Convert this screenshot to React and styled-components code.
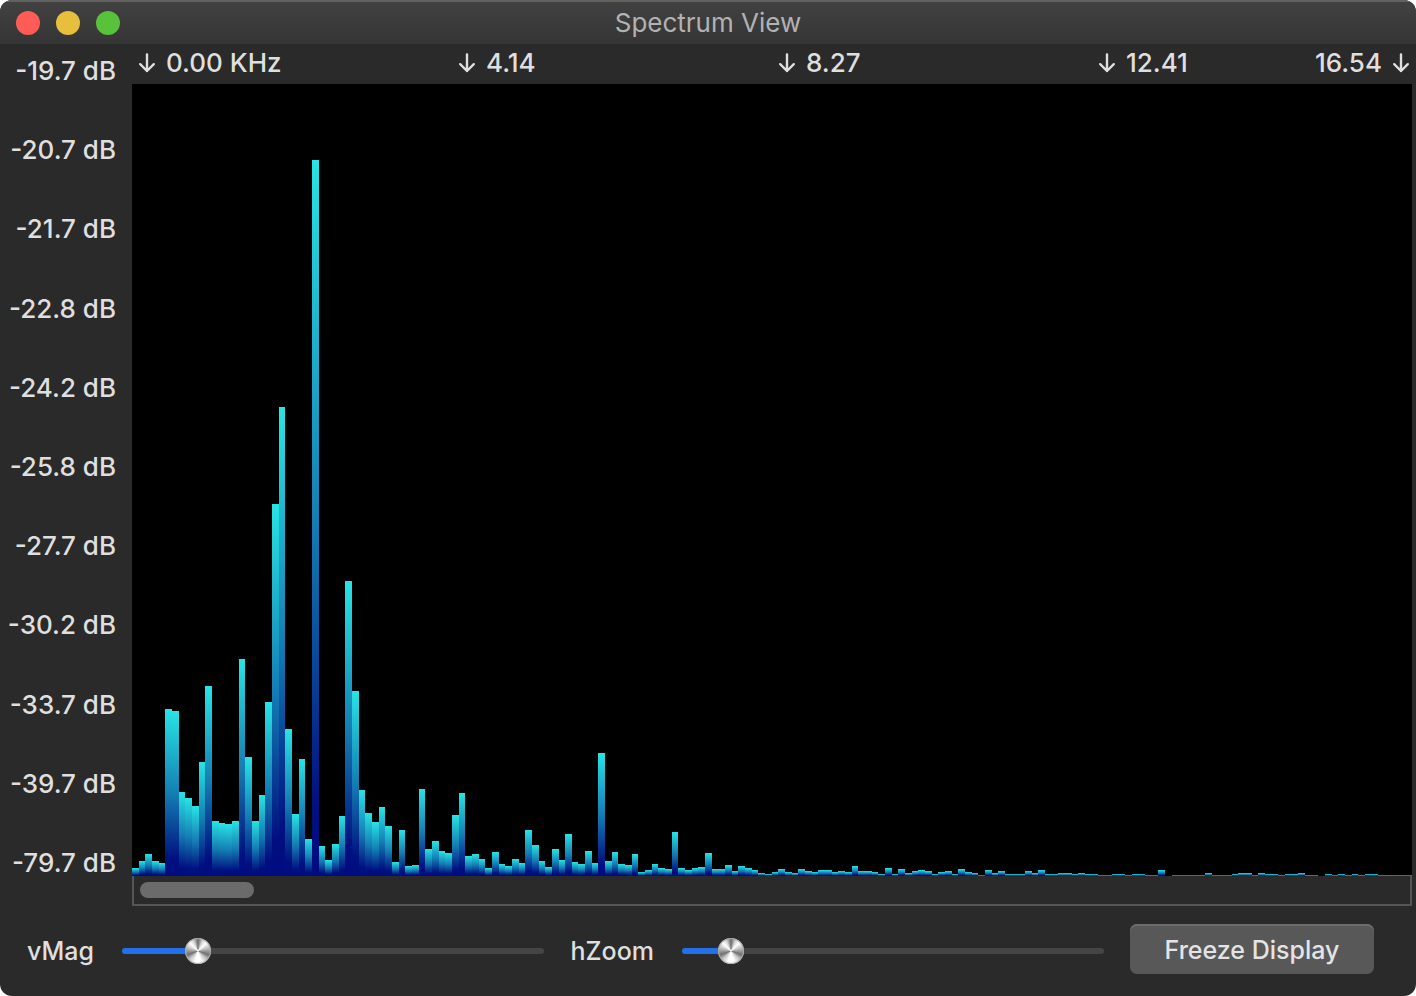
import React, { useState } from 'react';
import styled, { createGlobalStyle } from 'styled-components';

const GlobalStyle = createGlobalStyle`
  * {
    box-sizing: border-box;
  }

  body {
    margin: 0;
    background: #ffffff;
    font-family: Inter, sans-serif;
  }
`;

const Window = styled.main`
  display: flex;
  flex-direction: column;
  min-height: 100vh;
  border-radius: 12px;
  overflow: hidden;
  background: #2a2a2a;
  color: #dfdfdf;
  font-size: 26px;
  font-weight: 450;
  line-height: 32px;
`;

const TitleBar = styled.header`
  display: grid;
  grid-template-columns: 1fr auto 1fr;
  align-items: center;
  height: 44px;
  padding: 0 16px;
  border-top: 2px solid #626262;
  background: linear-gradient(#414141, #353535);
`;

const Lights = styled.div`
  display: flex;
  gap: 16px;
`;

const Light = styled.button`
  width: 24px;
  height: 24px;
  padding: 0;
  border: none;
  border-radius: 50%;
  background: ${(props) => props.$color};
`;

const Title = styled.h1`
  margin: 0;
  color: #b2b2b2;
  font-size: 26px;
  font-weight: 400;
`;

const Body = styled.div`
  display: grid;
  flex: 1;
  grid-template-columns: 132px 1fr;
  padding-right: 4px;
`;

const LevelScale = styled.div`
  display: flex;
  flex-direction: column;
  justify-content: space-between;
  padding: 11px 16px 27px 0;
  text-align: right;
  white-space: nowrap;
`;

const Display = styled.section`
  display: flex;
  flex-direction: column;
`;

const FrequencyScale = styled.div`
  display: grid;
  grid-template-columns: repeat(4, 1fr);
  height: 40px;
  padding-top: 3px;
`;

const Frequency = styled.div`
  display: flex;
  align-items: center;
  gap: 10px;
  height: 32px;
  padding-left: 6px;
`;

const LastFrequency = styled(Frequency)`
  padding: 0 2px 0 0;
`;

const LastCell = styled.div`
  display: flex;
  justify-content: space-between;
`;

const Arrow = styled.svg`
  width: 18px;
  height: 22px;
  fill: none;
  stroke: #dfdfdf;
  stroke-width: 2.4;
  stroke-linecap: round;
  stroke-linejoin: round;
`;

const Chart = styled.svg`
  display: block;
  flex: 1;
  width: 100%;
  min-height: 400px;
  background: #000000;
`;

const ScrollTrack = styled.div`
  height: 30px;
  padding: 6px;
  border: 2px solid #555555;
  border-top: none;
`;

const ScrollThumb = styled.div`
  width: 9%;
  height: 16px;
  border-radius: 8px;
  background: #6b6b6b;
`;

const Controls = styled.footer`
  display: grid;
  grid-template-columns: 94px 1fr 110px 1fr 270px;
  align-items: center;
  height: 90px;
  padding-right: 42px;
  font-size: 25px;
`;

const ControlLabel = styled.label`
  text-align: right;
`;

const Slider = styled.input`
  width: calc(100% - 28px);
  height: 26px;
  margin: 0 0 0 28px;
  appearance: none;
  background: transparent;

  &::-webkit-slider-runnable-track {
    height: 6px;
    border-radius: 3px;
    background: linear-gradient(
      to right,
      #2370e8 ${(props) => props.value}%,
      #454545 ${(props) => props.value}%
    );
  }

  &::-webkit-slider-thumb {
    width: 26px;
    height: 26px;
    margin-top: -10px;
    appearance: none;
    border-radius: 50%;
    background: conic-gradient(
      #6a6a6a, #d8d8d8 25deg, #ffffff 45deg, #c8c8c8 70deg, #707070 110deg,
      #c8c8c8 135deg, #ffffff 165deg, #ffffff 195deg, #c8c8c8 225deg,
      #707070 250deg, #c8c8c8 290deg, #ffffff 315deg, #d8d8d8 335deg, #6a6a6a
    );
    box-shadow: inset 0 0 1px 1px #aaaaaa;
  }
`;

const FreezeButton = styled.button`
  height: 50px;
  margin: 0 0 4px 26px;
  padding: 2px 0 0;
  border: none;
  border-radius: 7px;
  background: #585858;
  box-shadow: inset 0 2px 0 #6c6c6c;
  color: #e4e4e4;
  font: inherit;
`;

const levels = [
  '-19.7 dB', '-20.7 dB', '-21.7 dB', '-22.8 dB', '-24.2 dB', '-25.8 dB',
  '-27.7 dB', '-30.2 dB', '-33.7 dB', '-39.7 dB', '-79.7 dB',
];

const bins = [
  8, 15, 22, 15, 13, 167, 165, 84, 78, 70, 114, 190, 55, 53, 52, 55,
  217, 119, 55, 81, 174, 372, 469, 147, 62, 117, 37, 716, 30, 16, 32, 60,
  295, 185, 86, 63, 54, 69, 50, 14, 46, 10, 11, 87, 27, 35, 25, 23,
  61, 83, 20, 22, 17, 8, 24, 12, 10, 17, 13, 46, 31, 15, 9, 27,
  16, 42, 14, 12, 25, 13, 123, 15, 24, 12, 11, 22, 4, 6, 12, 8,
  7, 44, 8, 6, 8, 9, 23, 7, 7, 11, 5, 10, 8, 6, 3, 2,
  4, 7, 4, 3, 7, 5, 4, 6, 6, 4, 5, 4, 10, 5, 5, 4,
  2, 8, 2, 7, 3, 5, 6, 5, 2, 4, 5, 2, 7, 4, 3, 1,
  6, 3, 5, 2, 2, 2, 5, 3, 6, 2, 2, 3, 3, 2, 3, 2,
  2, 1, 1, 2, 2, 1, 2, 2, 1, 1, 6, 0, 1, 1, 1, 1,
  1, 3, 1, 1, 1, 2, 3, 3, 1, 3, 2, 2, 1, 2, 2, 3,
  1, 1, 0, 2, 1, 2, 1, 2, 1, 2, 2, 1, 1, 1, 1, 1,
];

const CHART_WIDTH = 1280;
const CHART_HEIGHT = 792;

// left edge of a bin, on a whole unit so neighbours never overlap
const binEdge = (index) => Math.round((index * (CHART_WIDTH - 0.5)) / bins.length);

function DownArrow() {
  return (
    <Arrow viewBox="0 0 18 22" aria-hidden="true">
      <path d="M9 2.5v16.5M2.2 12.2l6.8 6.8 6.8-6.8" />
    </Arrow>
  );
}

function Spectrum() {
  return (
    <Chart
      viewBox={`0 0 ${CHART_WIDTH} ${CHART_HEIGHT}`}
      preserveAspectRatio="none"
      shapeRendering="crispEdges"
      role="img"
      aria-label="Spectrum"
    >
      <defs>
        <linearGradient id="bar" x1="0" y1="0" x2="0" y2="1">
          <stop offset="0" stopColor="#28e4e4" />
          <stop offset="0.5" stopColor="#147eb4" />
          <stop offset="0.9" stopColor="#001080" />
          <stop offset="1" stopColor="#000c80" />
        </linearGradient>
      </defs>
      {bins.map((height, index) => (
        <rect
          key={index}
          x={binEdge(index)}
          y={CHART_HEIGHT - height}
          width={binEdge(index + 1) - binEdge(index)}
          height={height}
          fill="url(#bar)"
        />
      ))}
    </Chart>
  );
}

function App() {
  const [vMag, setVMag] = useState(16);
  const [hZoom, setHZoom] = useState(9);
  const [frozen, setFrozen] = useState(false);

  return (
    <>
      <GlobalStyle />
      <Window>
        <TitleBar>
          <Lights>
            <Light $color="#ff5c58" aria-label="Close" />
            <Light $color="#e6bf3c" aria-label="Minimize" />
            <Light $color="#58c23a" aria-label="Zoom" />
          </Lights>
          <Title>Spectrum View</Title>
        </TitleBar>
        <Body>
          <LevelScale>
            {levels.map((level) => (
              <div key={level}>{level}</div>
            ))}
          </LevelScale>
          <Display>
            <FrequencyScale>
              <Frequency><DownArrow />0.00 KHz</Frequency>
              <Frequency><DownArrow />4.14</Frequency>
              <Frequency><DownArrow />8.27</Frequency>
              <LastCell>
                <Frequency><DownArrow />12.41</Frequency>
                <LastFrequency>16.54<DownArrow /></LastFrequency>
              </LastCell>
            </FrequencyScale>
            <Spectrum />
            <ScrollTrack>
              <ScrollThumb />
            </ScrollTrack>
          </Display>
        </Body>
        <Controls>
          <ControlLabel htmlFor="vmag">vMag</ControlLabel>
          <Slider
            id="vmag"
            type="range"
            value={vMag}
            onChange={(e) => setVMag(Number(e.target.value))}
          />
          <ControlLabel htmlFor="hzoom">hZoom</ControlLabel>
          <Slider
            id="hzoom"
            type="range"
            value={hZoom}
            onChange={(e) => setHZoom(Number(e.target.value))}
          />
          <FreezeButton aria-pressed={frozen} onClick={() => setFrozen(!frozen)}>
            Freeze Display
          </FreezeButton>
        </Controls>
      </Window>
    </>
  );
}

export default App;
